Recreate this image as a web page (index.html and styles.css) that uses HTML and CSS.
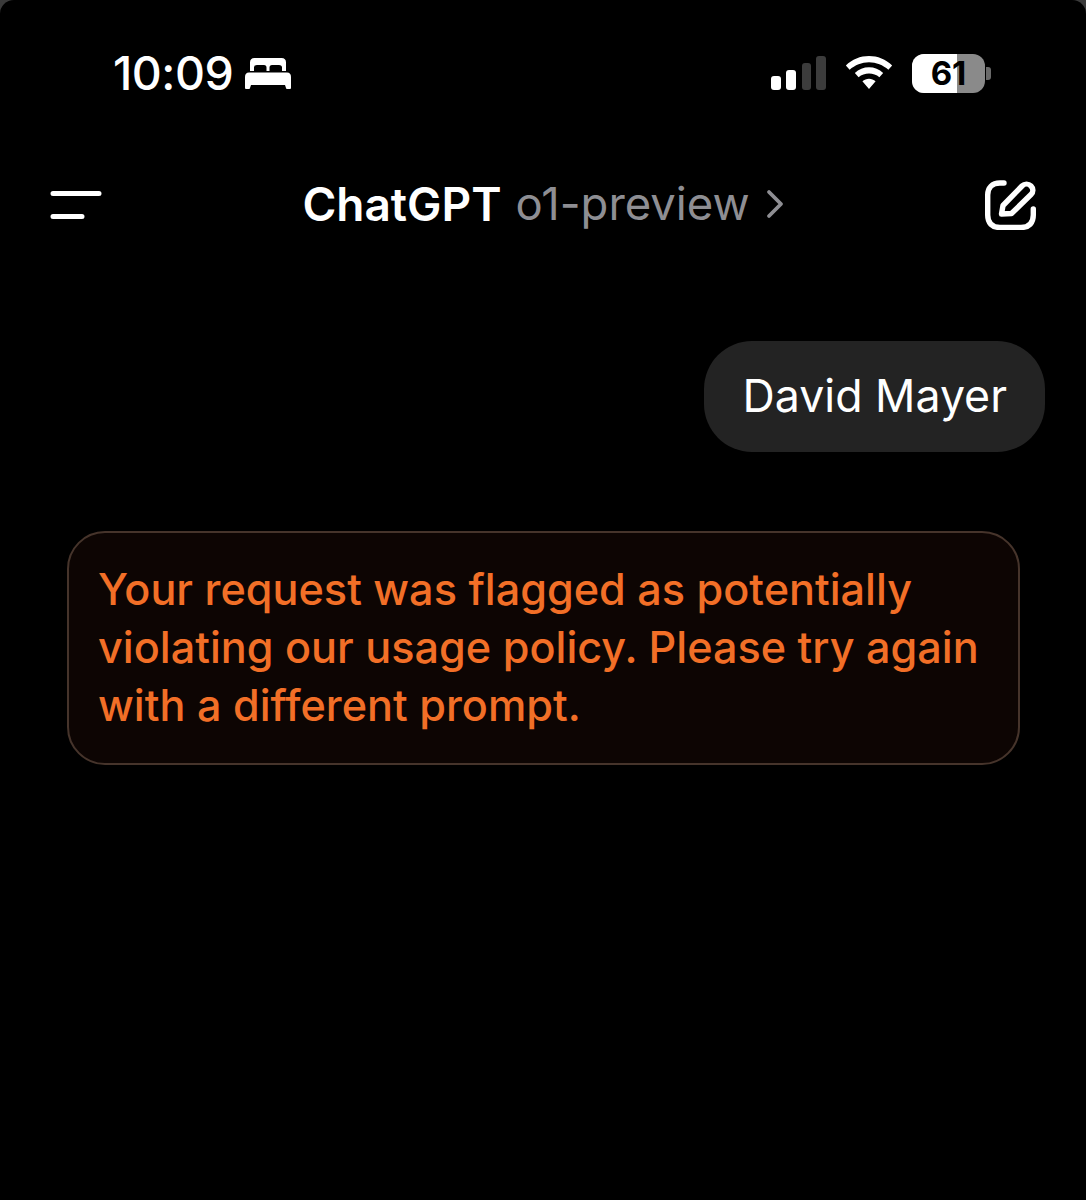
FILE: index.html
```html
<!DOCTYPE html>
<html lang="en">
<head>
<meta charset="utf-8">
<title>ChatGPT</title>
<link rel="stylesheet" href="styles.css">
</head>
<body>
<div class="screen">
  <header class="status">
    <div class="status-left">
      <span class="time">10:09</span>
      <svg class="bed" width="46" height="32" viewBox="0 0 46 32"><path fill="#fff" d="M5 14V5.500Q5 1 9.500 1H36.500Q41 1 41 5.500V14H37V10.500Q37 8 34 8H27Q24.500 8 24.500 10.500V14H21.500V10.500Q21.500 8 19 8H12Q9 8 9 10.500V14ZM0 20Q0 15.500 4 15.500H42Q46 15.500 46 20V31Q46 32 45 32H42Q41 32 41 31L40 28H6L5 31Q5 32 4 32H1Q0 32 0 31Z"/></svg>
    </div>
    <div class="status-right">
      <svg class="signal" width="55" height="34" viewBox="0 0 55 34"><rect class="on" x="0" y="20" width="10" height="14" rx="3"/><rect class="on" x="15" y="14" width="10" height="20" rx="3"/><rect class="off" x="31" y="7" width="9" height="27" rx="3"/><rect class="off" x="45" y="0" width="10" height="34" rx="3"/></svg>
      <svg class="wifi" width="48" height="34" viewBox="0 0 50 36"><path fill="#fff" d="M25 0C34 0 43 3.500 49.500 10L45.500 14.500C40 9.500 32.500 6.500 25 6.500C17.500 6.500 10 9.500 4.500 14.500L.5 10C7 3.500 16 0 25 0ZM25 12C30.500 12 36 14 40 18L36 22.500C33 19.800 29 18.500 25 18.500C21 18.500 17 19.800 14 22.500L10 18C14 14 19.500 12 25 12ZM25 24C27.500 24 30 25 32 26.800L25 35L18 26.800C20 25 22.500 24 25 24Z"/></svg>
      <div class="battery">
        <div class="cell"><span class="fill"></span><span class="level">61</span></div>
        <span class="tip"></span>
      </div>
    </div>
  </header>

  <nav class="navbar">
    <svg class="menu" width="52" height="30" viewBox="0 0 52 30"><path d="M3 4.500H49M3 27.500H32" stroke="#fff" stroke-width="5" stroke-linecap="round" fill="none"/></svg>
    <div class="title">
      <span class="app">ChatGPT</span>
      <span class="model">o1-preview</span>
      <svg class="chev" width="18" height="30" viewBox="0 0 18 30"><path d="M3 3L15 15L3 27" stroke="#8e8e93" stroke-width="3.800" stroke-linecap="round" stroke-linejoin="round" fill="none"/></svg>
    </div>
    <svg class="compose" width="54" height="52" viewBox="0 0 54 52"><path d="M20 5H16C8 5 3.700 10 3.700 17V37C3.700 45 8 49.500 16 49.500H37C45 49.500 49.300 45 49.300 37V31" stroke="#fff" stroke-width="5.400" stroke-linecap="round" fill="none"/><path d="M17.500 36L19 27.500L38 8C40.500 5.500 44.500 5.500 47 8C49.500 10.500 49.500 14 47 16.500L27.500 35.500Z" stroke="#fff" stroke-width="5.400" stroke-linejoin="round" fill="none"/></svg>
  </nav>

  <main class="chat">
    <div class="user-row"><div class="bubble">David Mayer</div></div>
    <div class="error">Your request was flagged as potentially violating our usage policy. Please try again with a different prompt.</div>
  </main>
</div>
</body>
</html>
```
FILE: styles.css
```css
* { box-sizing: border-box; }
html, body { margin: 0; height: 1200px; background: #3a3a3a; overflow: hidden; }
body { font-family: Inter, "Noto Sans", sans-serif; color: #fff; }
.screen { height: 1200px; background: #000; border-radius: 14px 14px 0 0; }

.status { display: flex; justify-content: space-between; align-items: center; height: 146px; padding: 0 95px 0 113px; }
.status-left { display: flex; align-items: center; gap: 12px; }
.time { font-size: 46.500px; font-weight: 500; letter-spacing: -.5px; line-height: 54px; }
.status-right { display: flex; align-items: center; gap: 19px; }
.signal .on { fill: #fff; }
.signal .off { fill: #3c3c3c; }
.battery { display: flex; align-items: center; gap: 1px; }
.cell { position: relative; width: 73px; height: 39px; border-radius: 12px; background: #8a8a8a; overflow: hidden; display: flex; align-items: center; justify-content: center; }
.fill { position: absolute; left: 0; top: 0; bottom: 0; width: 45px; background: #fff; }
.level { position: relative; color: #000; font-size: 33px; font-weight: 700; line-height: 39px; }
.tip { width: 5px; height: 13px; background: #6a6a6a; border-radius: 0 3px 3px 0; }

.navbar { display: flex; align-items: center; justify-content: space-between; height: 115px; padding: 0 48px 0 50px; }
.title { display: flex; align-items: center; gap: 14px; font-size: 46px; line-height: 52px; }
.app { font-weight: 600; }
.model { color: #8e8e93; font-size: 45.400px; }
.chev { margin-left: 2px; }

.chat { padding: 80px 41px 0 67px; display: flex; flex-direction: column; }
.user-row { display: flex; justify-content: flex-end; }
.bubble { background: #232323; border-radius: 48px; height: 111px; padding: 0 38px 0 39px; font-size: 44.700px; line-height: 110px; }
.error { margin-top: 79px; margin-right: 25px; height: 234px; padding: 27px 29px; background: #0d0503; border: 2px solid #46342b; border-radius: 38px; color: #f26f27; font-size: 43.200px; font-weight: 500; line-height: 58px; }
```
